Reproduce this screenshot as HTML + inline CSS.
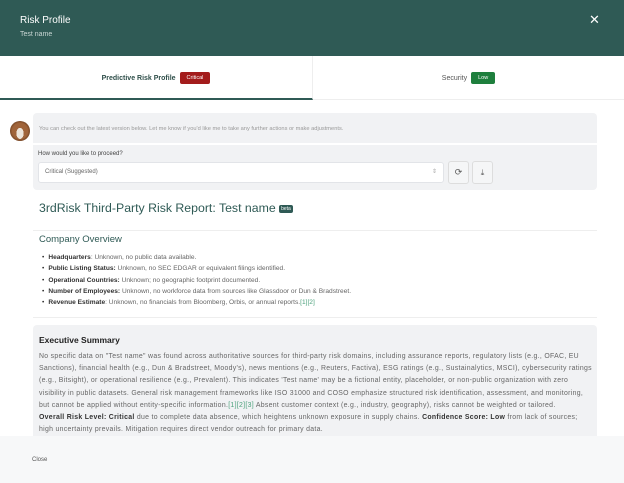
<!DOCTYPE html>
<html><head><meta charset="utf-8"><style>
*{margin:0;padding:0;box-sizing:border-box}
body{width:624px;height:483px;overflow:hidden;background:#fff;font-family:"Liberation Sans",sans-serif;position:relative;color:#333}
.a{position:absolute}
.hdr{left:0;top:0;width:624px;height:56px;background:#2f5a55;color:#fff}
.badge{display:inline-block;color:#fff;font-size:5.5px;line-height:6px;padding:3px 7px;border-radius:2px;vertical-align:middle;margin-left:4px;font-weight:normal}
ul{list-style:none}
li{font-size:6.6px;color:#666;height:11.3px;line-height:11.3px}
li:before{content:"•";margin-right:4px;color:#333}
li b{color:#333}
.p{font-size:6.9px;color:#666;line-height:12.2px;letter-spacing:0.31px;white-space:nowrap}
.p b{color:#333}
.g{color:#4aa07a}
</style></head><body>
<div class="a hdr">
<div class="a" style="left:20px;top:15px;font-size:10px">Risk Profile</div>
<div class="a" style="left:20px;top:31px;font-size:7px;color:#c9d6d4">Test name</div>
<div class="a" style="left:589px;top:12px;font-size:13px">✕</div>
</div>
<div class="a" style="left:0;top:56px;width:313px;height:44px;border-bottom:2px solid #2f5a55;border-right:1px solid #eee;text-align:center;line-height:46px;font-size:7px;color:#2f4f4a;font-weight:bold">Predictive Risk Profile<span class="badge" style="background:#a31c1c">Critical</span></div>
<div class="a" style="left:313px;top:56px;width:311px;height:44px;border-bottom:1px solid #eee;text-align:center;line-height:46px;font-size:7px;color:#555">Security<span class="badge" style="background:#1e7f3d">Low</span></div>
<div class="a" style="left:10px;top:121px;width:20px;height:20px;border-radius:50%;background:radial-gradient(ellipse 30% 45% at 50% 62%,#ece4da 0 60%,transparent 62%),radial-gradient(circle at 50% 50%,#a0643a 0 55%,#5e3418 80%)"></div>
<div class="a" style="left:33px;top:127px;width:0;height:0;border:4px solid transparent;border-right-color:#f1f2f4"></div>
<div class="a" style="left:33px;top:113px;width:564px;height:77px;background:#f1f2f4;border-radius:4px"></div>
<div class="a" style="left:33px;top:143px;width:564px;height:2px;background:#fff"></div>
<div class="a" style="left:39px;top:126px;font-size:5.7px;color:#999">You can check out the latest version below. Let me know if you'd like me to take any further actions or make adjustments.</div>
<div class="a" style="left:38px;top:151px;font-size:6px;color:#444">How would you like to proceed?</div>
<div class="a" style="left:38px;top:162px;width:406px;height:21px;background:#fff;border:1px solid #e2e4e8;border-radius:3px;font-size:6px;color:#666;padding:0 6px;line-height:19px">Critical (Suggested)<span style="position:absolute;right:6px;color:#aaa;font-size:6px">⇕</span></div>
<div class="a" style="left:448px;top:161px;width:21px;height:23px;border:1px solid #ddd;border-radius:3px;background:#f5f6f7;text-align:center;line-height:21px;font-size:9px;color:#555">⟳</div>
<div class="a" style="left:472px;top:161px;width:21px;height:23px;border:1px solid #ddd;border-radius:3px;background:#f5f6f7;text-align:center;line-height:21px;font-size:8px;color:#555">⤓</div>
<div class="a" style="left:39px;top:201px;font-size:12.3px;color:#2f5a55">3rdRisk Third-Party Risk Report: Test name <span style="font-size:5px;background:#2f5a55;color:#fff;padding:1px 2px;border-radius:2px;vertical-align:middle">beta</span></div>
<div class="a" style="left:33px;top:230px;width:564px;height:1px;background:#eee"></div>
<div class="a" style="left:39px;top:234px;font-size:9.5px;color:#2f5a55">Company Overview</div>
<ul class="a" style="left:42px;top:252px">
<li><b>Headquarters</b>: Unknown, no public data available.</li>
<li><b>Public Listing Status:</b> Unknown, no SEC EDGAR or equivalent filings identified.</li>
<li><b>Operational Countries:</b> Unknown; no geographic footprint documented.</li>
<li><b>Number of Employees:</b> Unknown, no workforce data from sources like Glassdoor or Dun &amp; Bradstreet.</li>
<li><b>Revenue Estimate</b>: Unknown, no financials from Bloomberg, Orbis, or annual reports.<span class="g">[1][2]</span></li>
</ul>
<div class="a" style="left:33px;top:317px;width:564px;height:1px;background:#eee"></div>
<div class="a" style="left:33px;top:325px;width:564px;height:120px;background:#f1f2f4;border-radius:4px"></div>
<div class="a" style="left:39px;top:335px;font-size:8.5px;font-weight:bold;color:#222">Executive Summary</div>
<div class="a p" style="left:39px;top:351px">No specific data on "Test name" was found across authoritative sources for third-party risk domains, including assurance reports, regulatory lists (e.g., OFAC, EU<br>Sanctions), financial health (e.g., Dun &amp; Bradstreet, Moody's), news mentions (e.g., Reuters, Factiva), ESG ratings (e.g., Sustainalytics, MSCI), cybersecurity ratings<br>(e.g., Bitsight), or operational resilience (e.g., Prevalent). This indicates 'Test name' may be a fictional entity, placeholder, or non-public organization with zero<br>visibility in public datasets. General risk management frameworks like ISO 31000 and COSO emphasize structured risk identification, assessment, and monitoring,<br>but cannot be applied without entity-specific information.<span class="g">[1][2][3]</span> Absent customer context (e.g., industry, geography), risks cannot be weighted or tailored.<br><b>Overall Risk Level: Critical</b> due to complete data absence, which heightens unknown exposure in supply chains. <b>Confidence Score: Low</b> from lack of sources;<br>high uncertainty prevails. Mitigation requires direct vendor outreach for primary data.</div>
<div class="a" style="left:0;top:436px;width:624px;height:47px;background:#f7f8f9"></div>
<div class="a" style="left:32px;top:457px;font-size:6px;color:#555">Close</div>
</body></html>
